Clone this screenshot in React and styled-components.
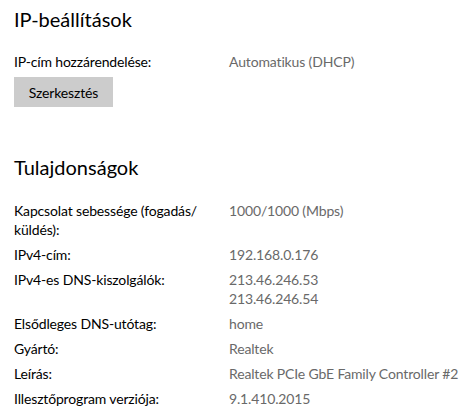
import React from "react";
import styled, { createGlobalStyle } from "styled-components";

const GlobalStyle = createGlobalStyle`
  html, body {
    margin: 0;
    padding: 0;
    background: #ffffff;
  }
  body {
    font-family: Lato, "Noto Sans", sans-serif;
    color: #000000;
  }
`;

const Page = styled.div`
  width: 468px;
  height: 412px;
  overflow: hidden;
  padding: 0 0 0 14px;
  box-sizing: border-box;
`;

const Section = styled.section`
  display: flex;
  flex-direction: column;
  padding-top: ${(p) => p.$top}px;
`;

const Title = styled.h2`
  margin: 0 0 ${(p) => p.$gap}px;
  font-size: 20px;
  font-weight: 400;
  line-height: 28px;
`;

const List = styled.div`
  display: flex;
  flex-direction: column;
  gap: 6px;
`;

const Row = styled.div`
  display: grid;
  grid-template-columns: 200px 1fr;
  column-gap: 15px;
  font-size: 14px;
  line-height: 19px;
  letter-spacing: -0.15px;
`;

const Label = styled.div`
  color: #000000;
`;

const Value = styled.div`
  color: #696969;
  white-space: nowrap;
`;

const Button = styled.button`
  align-self: flex-start;
  margin-top: 6px;
  width: 99px;
  height: 30px;
  border: none;
  background: #cccccc;
  font-family: inherit;
  font-size: 14px;
  letter-spacing: -0.15px;
  color: #000000;
  padding: 0;
`;

const ipRows = [["IP-cím hozzárendelése:", ["Automatikus (DHCP)"]]];

const propRows = [
  ["Kapcsolat sebessége (fogadás/ küldés):", ["1000/1000 (Mbps)"]],
  ["IPv4-cím:", ["192.168.0.176"]],
  ["IPv4-es DNS-kiszolgálók:", ["213.46.246.53", "213.46.246.54"]],
  ["Elsődleges DNS-utótag:", ["home"]],
  ["Gyártó:", ["Realtek"]],
  ["Leírás:", ["Realtek PCIe GbE Family Controller #2"]],
  ["Illesztőprogram verziója:", ["9.1.410.2015"]],
];

const renderRows = (rows) =>
  rows.map(([label, values]) => (
    <Row key={label}>
      <Label>{label}</Label>
      <Value>
        {values.map((v) => (
          <div key={v}>{v}</div>
        ))}
      </Value>
    </Row>
  ));

export default function App() {
  return (
    <>
      <GlobalStyle />
      <Page>
        <Section $top={5}>
          <Title $gap={19}>IP-beállítások</Title>
          <List>{renderRows(ipRows)}</List>
          <Button>Szerkesztés</Button>
        </Section>
        <Section $top={46}>
          <Title $gap={20}>Tulajdonságok</Title>
          <List>{renderRows(propRows)}</List>
        </Section>
      </Page>
    </>
  );
}
